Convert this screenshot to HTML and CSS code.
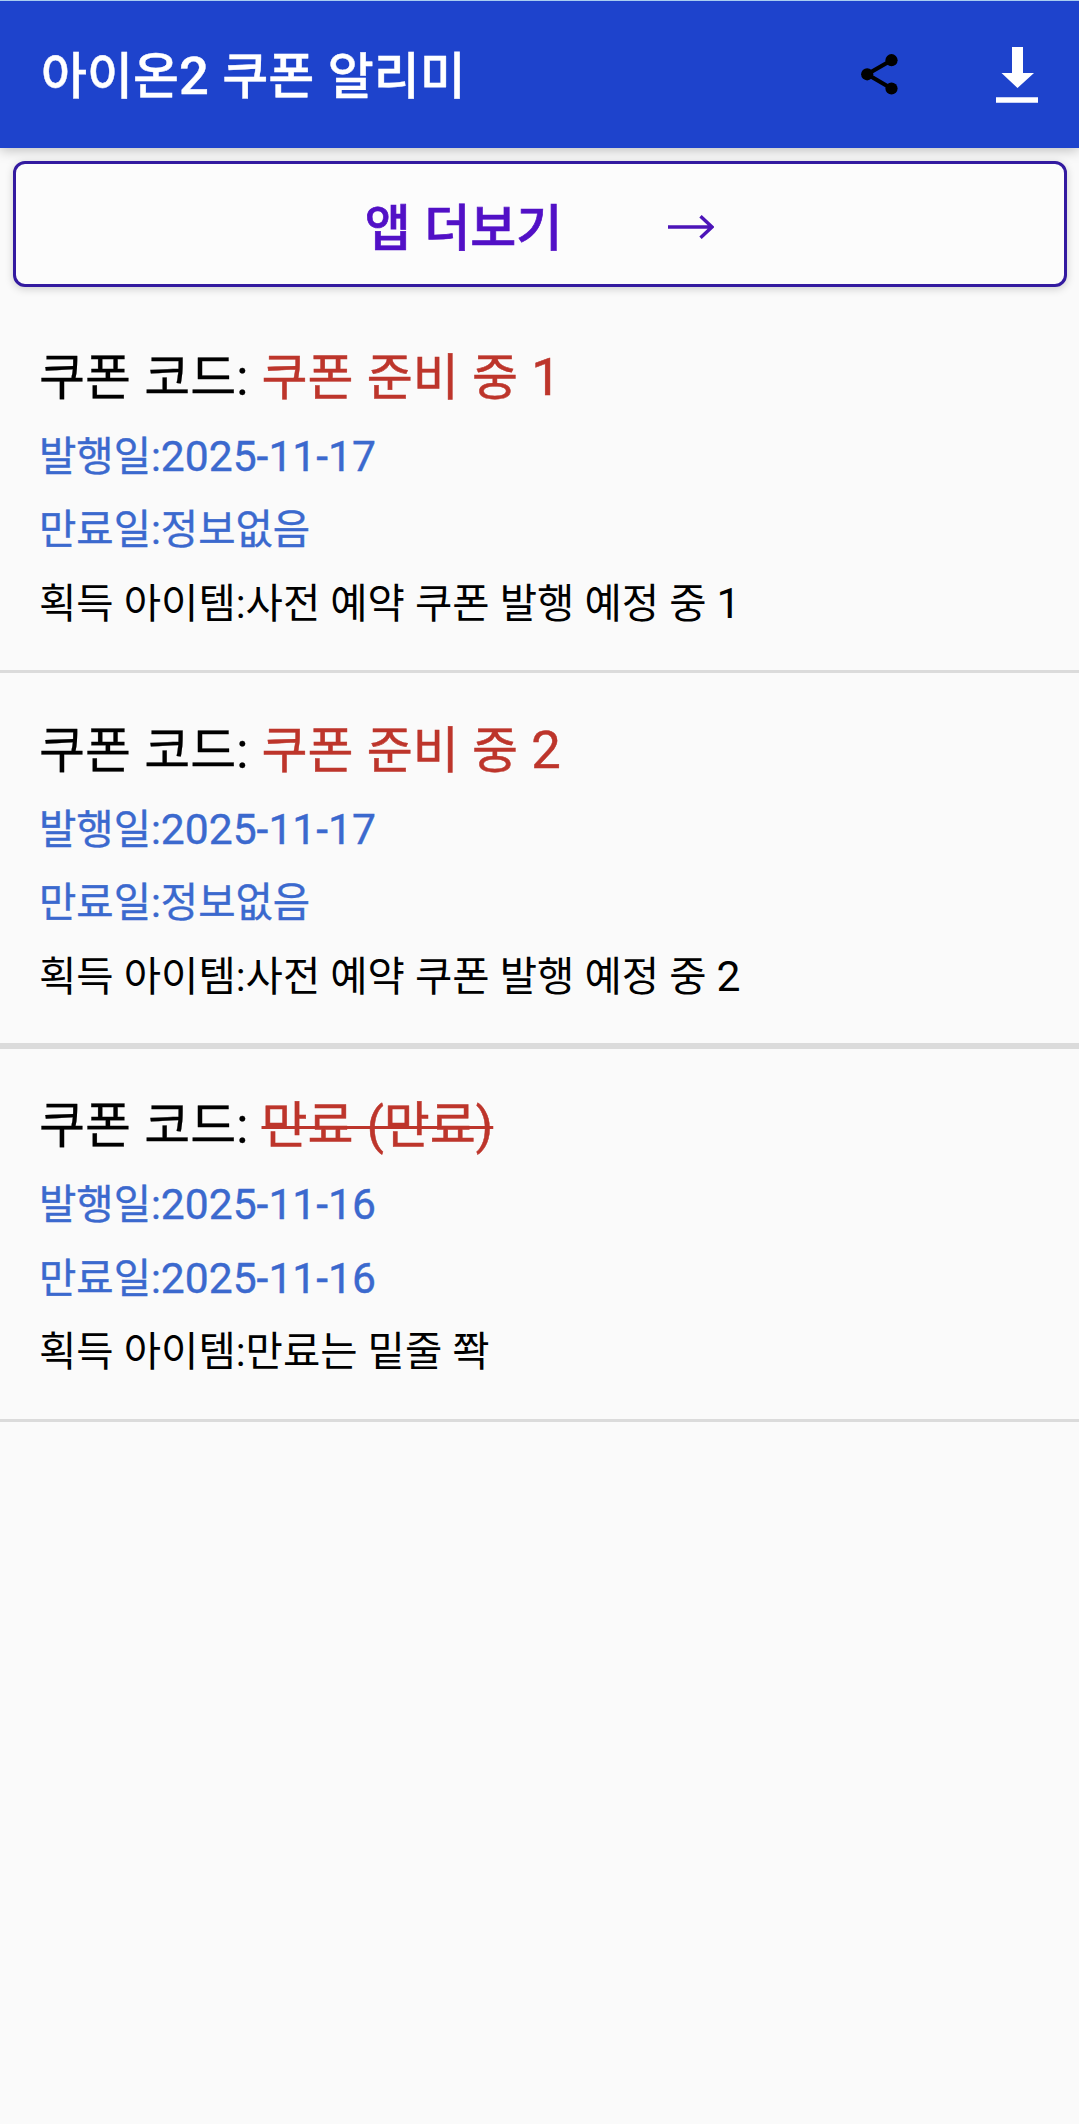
FILE: index.html
```html
<!DOCTYPE html>
<html lang="ko">
<head>
    <meta charset="UTF-8">
    <meta name="viewport" content="width=device-width, initial-scale=1.0">
    <title>아이온2 쿠폰 알리미</title>
    <link rel="stylesheet" href="styles.css">
</head>
<body>

<header class="app-bar">
    <h1>아이온<span class="num">2</span> 쿠폰 알리미</h1>
    <button class="icon-btn" aria-label="공유">
        <svg class="share-icon" viewBox="0 0 37 41">
            <path d="M30.5 6.2 6.2 20.3 30.5 34.5" fill="none" stroke="#000" stroke-width="4.2"/>
            <circle cx="30.5" cy="6.2" r="6.1"/>
            <circle cx="6.2" cy="20.3" r="6.1"/>
            <circle cx="30.5" cy="34.5" r="6.1"/>
        </svg>
    </button>
    <button class="icon-btn" aria-label="다운로드">
        <svg class="download-icon" viewBox="0 0 42 56">
            <path d="M16 0h11v26h11L21.500 41 5.500 26h10.500zM0 50.300h42v5.400H0z" fill="#fff"/>
        </svg>
    </button>
</header>

<button class="more-btn">
    <span>앱 더보기</span>
    <svg class="arrow-icon" viewBox="0 0 46 24">
        <path d="M0 12h44M32.500 1.200 44 12 32.500 22.800" fill="none" stroke="#4c14b8" stroke-width="3.4"/>
    </svg>
</button>

<main class="coupon-list">
    <section class="coupon">
        <h2>쿠폰 코드: <span class="code">쿠폰 준비 중 <span class="num">1</span></span></h2>
        <p class="date">발행일:<span class="num">2025-11-17</span></p>
        <p class="date">만료일:정보없음</p>
        <p>획득 아이템:사전 예약 쿠폰 발행 예정 중 <span class="num">1</span></p>
    </section>
    <section class="coupon last-active">
        <h2>쿠폰 코드: <span class="code">쿠폰 준비 중 <span class="num">2</span></span></h2>
        <p class="date">발행일:<span class="num">2025-11-17</span></p>
        <p class="date">만료일:정보없음</p>
        <p>획득 아이템:사전 예약 쿠폰 발행 예정 중 <span class="num">2</span></p>
    </section>
    <section class="coupon">
        <h2>쿠폰 코드: <span class="code expired">만료 (만료)</span></h2>
        <p class="date">발행일:<span class="num">2025-11-16</span></p>
        <p class="date">만료일:<span class="num">2025-11-16</span></p>
        <p>획득 아이템:만료는 밑줄 쫙</p>
    </section>
</main>

</body>
</html>
```
FILE: styles.css
```css
* {
    box-sizing: border-box;
}

body {
    margin: 0;
    min-height: 2124px;
    background-color: #fafafa;
    color: #000;
    font-family: Roboto, "Noto Sans CJK KR", sans-serif;
}

h1, h2, p {
    margin: 0;
    font-weight: 400;
    white-space: nowrap;
}

button {
    border: none;
    padding: 0;
    background: none;
    font-family: inherit;
}

svg {
    display: block;
}

/* Latin digits run slightly larger than the Hangul */
.num {
    font-size: 1.05em;
}

/* App bar */
.app-bar {
    display: flex;
    align-items: center;
    height: 148px;
    padding: 0 41px 0 41px;
    border-top: 1px solid #a9cdf0;
    background-color: #1e43cc;
    box-shadow: 0 2px 12px rgba(0,0,0,0.25);
}

.app-bar h1 {
    flex: 1;
    padding-top: 3px;
    color: #fff;
    font-size: 50px;
    line-height: 74px;
    font-weight: 500;
    word-spacing: 1px;
    -webkit-text-stroke: 0.4px #fff;
}

.share-icon {
    width: 37px;
    height: 41px;
}

.download-icon {
    width: 42px;
    height: 56px;
    margin-left: 98px;
}

/* More apps button */
.more-btn {
    display: flex;
    align-items: center;
    justify-content: center;
    gap: 106px;
    width: 1054px;
    height: 126px;
    margin: 13px 12px 13px 13px;
    padding: 0 1px 1px 0;
    border: 3px solid #331aa0;
    border-radius: 12px;
    background-color: #fcfcfc;
    box-shadow: 0 2px 8px rgba(0,0,0,0.18);
    color: #5210c6;
    font-size: 50px;
    font-weight: 500;
    word-spacing: 1px;
    -webkit-text-stroke: 0.7px #5210c6;
}

.arrow-icon {
    width: 46px;
    height: 24px;
    margin-top: 6px;
}

/* Coupons */
.coupon {
    height: 373px;
    padding: 40px 39px 0;
    border-bottom: 3px solid #dbdbdb;
}

.coupon.last-active {
    height: 376px;
    border-bottom-width: 6px;
}

.coupon h2 {
    margin-bottom: 5px;
    font-size: 50px;
    line-height: 74px;
    word-spacing: 0.8px;
    -webkit-text-stroke: 0.3px #000;
}

.coupon p {
    font-size: 40.6px;
    line-height: 73px;
}

.coupon .date {
    color: #3b69ce;
    -webkit-text-stroke: 0.4px #3b69ce;
}

.coupon .code {
    color: #bd352b;
    -webkit-text-stroke: 0.5px #bd352b;
}

.expired {
    text-decoration: line-through;
    text-decoration-thickness: 3px;
}
```
